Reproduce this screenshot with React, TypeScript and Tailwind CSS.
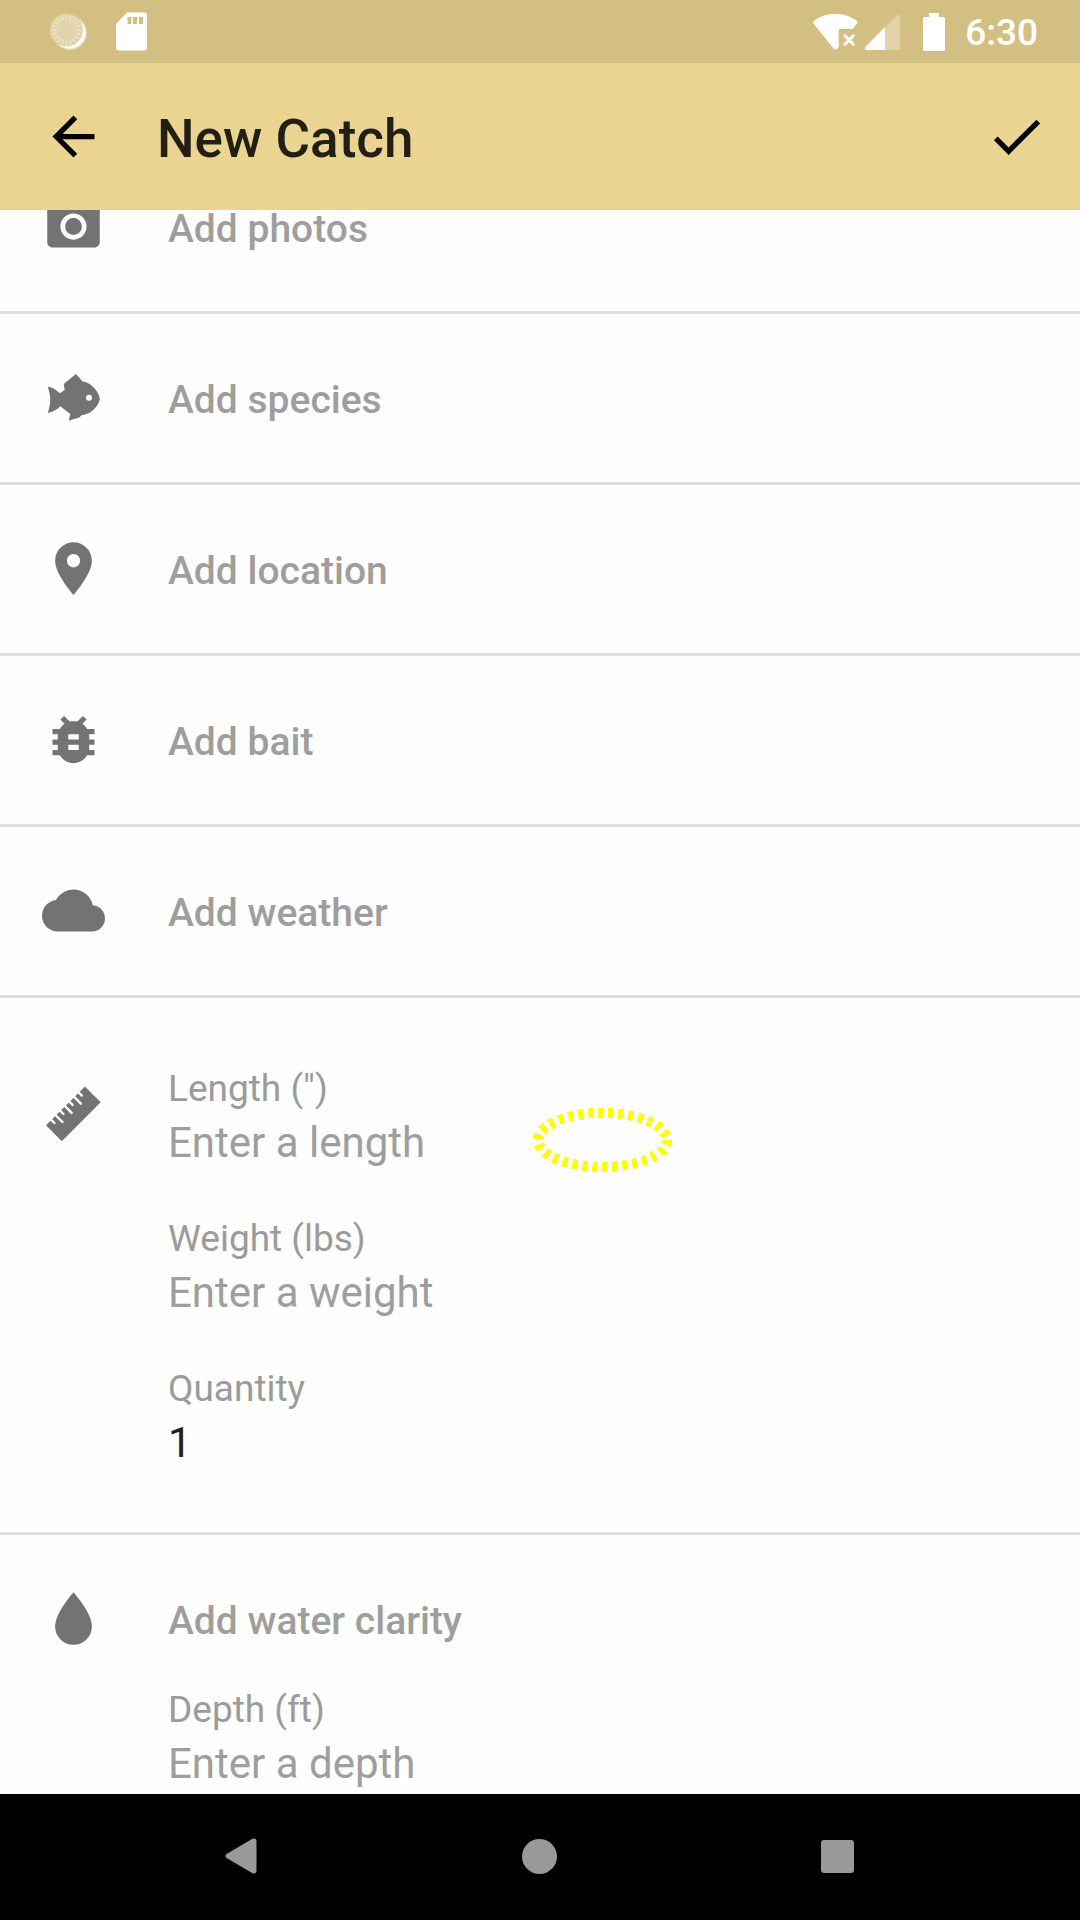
import React from "react";

const ICONS = {
  camera:
    "M9 2L7.17 4H4c-1.1 0-2 .9-2 2v12c0 1.1.9 2 2 2h16c1.1 0 2-.9 2-2V6c0-1.1-.9-2-2-2h-3.17L15 2H9zm3 15c-2.76 0-5-2.24-5-5s2.24-5 5-5 5 2.24 5 5-2.24 5-5 5zM12 8.8a3.2 3.2 0 1 0 0 6.4 3.2 3.2 0 0 0 0-6.4z",
  pin: "M12 2C8.13 2 5 5.13 5 9c0 5.25 7 13 7 13s7-7.75 7-13c0-3.87-3.13-7-7-7zm0 9.5c-1.38 0-2.5-1.12-2.5-2.5s1.12-2.5 2.5-2.5 2.5 1.12 2.5 2.5-1.12 2.5-2.5 2.5z",
  bug: "M20 8h-2.81c-.45-.78-1.07-1.45-1.82-1.96L17 4.41 15.59 3l-2.17 2.17C12.96 5.06 12.49 5 12 5c-.49 0-.96.06-1.41.17L8.41 3 7 4.41l1.62 1.63C7.88 6.55 7.26 7.22 6.81 8H4v2h2.09c-.05.33-.09.66-.09 1v1H4v2h2v1c0 .34.04.67.09 1H4v2h2.81c1.04 1.79 2.97 3 5.19 3s4.15-1.21 5.19-3H20v-2h-2.09c.05-.33.09-.66.09-1v-1h2v-2h-2v-1c0-.34-.04-.67-.09-1H20V8zm-6 8h-4v-2h4v2zm0-4h-4v-2h4v2z",
  cloud:
    "M19.35 10.04C18.67 6.59 15.64 4 12 4 9.11 4 6.6 5.64 5.35 8.04 2.34 8.36 0 10.91 0 14c0 3.31 2.69 6 6 6h13c2.76 0 5-2.24 5-5 0-2.64-2.05-4.78-4.65-4.96z",
  drop: "M12 22c-3.87 0-7-3.13-7-7 0-5.25 7-13 7-13s7 7.75 7 13c0 3.87-3.13 7-7 7z",
  back: "M20 11H7.83l5.59-5.59L12 4l-8 8 8 8 1.41-1.41L7.83 13H20v-2z",
  check: "M9 16.17L4.83 12l-1.42 1.41L9 19 21 7l-1.41-1.41z",
};

function Icon({ d }: { d: string }) {
  return (
    <svg aria-hidden="true" viewBox="0 0 24 24" className="size-[63px] shrink-0 fill-current">
      <path fillRule="evenodd" d={d} />
    </svg>
  );
}

function FishIcon() {
  return (
    <svg aria-hidden="true" viewBox="6 3 189 189" className="size-[63px] shrink-0 fill-current">
      <path d="M23 65C37 67 50 74 59 85L74 75L71 57L108 27L127 49C152 53 174 75 180 102C172 131 148 149 124 151L119 157L86 167L91 147L61 124C51 135 38 141 23 144C33 118 33 91 23 65Z" />
      <circle cx="147" cy="98" r="9" className="fill-[#fefefe]" />
    </svg>
  );
}

function RulerIcon() {
  const marks = [
    [23, 13],
    [42, 28],
    [61, 13],
    [81, 28],
    [100, 13],
    [120, 28],
    [139, 13],
  ];
  return (
    <svg aria-hidden="true" viewBox="6 6 189 189" className="size-[63px] shrink-0 fill-current">
      <g transform="translate(18 136) rotate(-45)">
        <rect width="165" height="67" rx="2" />
        {marks.map(([x, depth]) => (
          <path key={x} d={`M${x} -4V${depth}`} className="stroke-[#fefefe]" strokeWidth="7" strokeLinecap="round" />
        ))}
      </g>
    </svg>
  );
}

function StatusBar() {
  const ticks = Array.from({ length: 20 }, (_, i) => i * 18);
  return (
    <div className="flex h-[63px] shrink-0 items-center bg-[#d4bf83] pr-[42px] pl-[49px] text-white">
      <svg aria-hidden="true" viewBox="0 0 39 39" className="size-[39px]">
        <circle cx="21" cy="21" r="17" fill="white" opacity="0.45" />
        <circle cx="20.5" cy="20.5" r="16" fill="white" />
        <circle cx="17.5" cy="18" r="16.5" fill="#e1d3aa" />
        {ticks.map((a) => (
          <path
            key={a}
            d="M17.5 3V8"
            transform={`rotate(${a} 17.5 18)`}
            stroke="#ece2c6"
            strokeWidth="1.6"
          />
        ))}
      </svg>
      <svg aria-hidden="true" viewBox="0 0 31 39" className="ml-7 h-[39px] w-[31px]">
        <path
          fill="currentColor"
          fillRule="evenodd"
          d="M11 .5H28Q31 .5 31 3.500V35.500Q31 38.500 28 38.500H3Q0 38.500 0 35.500V12ZM11.500 5V12H15.500V5ZM17 5V12H21V5ZM23 5V12H27V5Z"
        />
      </svg>
      <div className="ml-auto flex items-center">
        <svg aria-hidden="true" viewBox="98 36 135 114" className="h-[38px] w-[45px]">
          <path
            fill="currentColor"
            d="M98 66Q97 62 101 59Q129 38 165 38Q201 38 229 59Q233 62 231 67L219 82Q217 84 214 84H178Q175 84 175 87V138Q172 146 165 146Q161 145 159 142Z"
          />
          <path d="M194 104L219 130M219 104L194 130" stroke="currentColor" strokeWidth="9" strokeLinecap="round" />
        </svg>
        <svg aria-hidden="true" viewBox="255 36 105 114" className="ml-[7px] h-[38px] w-[35px]">
          <path fill="currentColor" opacity="0.3" d="M315 80L351 43Q360 39 360 47V143Q360 147 356 147H315Z" />
          <path fill="currentColor" d="M315 78V147H259Q253 145 256 138Z" />
        </svg>
        <svg aria-hidden="true" viewBox="0 0 22 38" className="ml-[23px] h-[38px] w-[22px]">
          <path
            fill="currentColor"
            d="M6 0H16V4H20.500Q22 4 22 5.500V36.500Q22 38 20.500 38H1.500Q0 38 0 36.500V5.500Q0 4 1.500 4H6Z"
          />
        </svg>
        <span className="ml-5 pt-[3px] text-[37px] leading-[50px] font-medium">6:30</span>
      </div>
    </div>
  );
}

function AddLabel({ children }: { children: React.ReactNode }) {
  return <span className="pt-[5px] text-[39px] leading-[38px] font-medium text-[#9e9e9e]">{children}</span>;
}

function AddRow({ icon, label }: { icon: React.ReactNode; label: string }) {
  return (
    <button
      type="button"
      className="flex w-full items-center gap-[63px] border-b-[3px] border-[#dedede] px-[42px] pt-[52px] pb-[53px] text-left text-[#737373]"
    >
      {icon}
      <AddLabel>{label}</AddLabel>
    </button>
  );
}

function Field({ id, label, placeholder, value }: { id: string; label: string; placeholder?: string; value?: string }) {
  return (
    <div className="flex flex-col">
      <label htmlFor={id} className="text-[37px] leading-[50px] text-[#9b9b9b]">
        {label}
      </label>
      <input
        id={id}
        type="text"
        placeholder={placeholder}
        defaultValue={value}
        className="h-[58px] w-full bg-transparent text-[42px] leading-[58px] text-[#212121] outline-none placeholder:text-[#9e9e9e]"
      />
    </div>
  );
}

export default function App() {
  return (
    <div className="flex h-screen flex-col overflow-hidden bg-[#fefefe] font-[Roboto,sans-serif]">
      <StatusBar />
      <header className="flex h-[147px] shrink-0 items-center bg-[#ebd391] pr-8 pl-[42px] text-black">
        <button type="button" aria-label="Back">
          <Icon d={ICONS.back} />
        </button>
        <h1 className="ml-[52px] pt-1 text-[53px] leading-[64px] font-medium text-[#221f15]">New Catch</h1>
        <button type="button" aria-label="Save" className="ml-auto">
          <Icon d={ICONS.check} />
        </button>
      </header>

      <main className="min-h-0 flex-1 overflow-hidden">
        <div className="-mt-[67px]">
          <AddRow icon={<Icon d={ICONS.camera} />} label="Add photos" />
          <AddRow icon={<FishIcon />} label="Add species" />
          <AddRow icon={<Icon d={ICONS.pin} />} label="Add location" />
          <AddRow icon={<Icon d={ICONS.bug} />} label="Add bait" />
          <AddRow icon={<Icon d={ICONS.cloud} />} label="Add weather" />

          <section className="relative flex gap-[63px] border-b-[3px] border-[#dedede] px-[42px] pt-[66px] pb-[60px] text-[#737373]">
            <div className="pt-[18px]">
              <RulerIcon />
            </div>
            <div className="flex flex-1 flex-col gap-[42px]">
              <Field id="length" label={'Length (")'} placeholder="Enter a length" />
              <Field id="weight" label="Weight (lbs)" placeholder="Enter a weight" />
              <Field id="quantity" label="Quantity" value="1" />
            </div>
            <svg
              aria-hidden="true"
              viewBox="0 0 140 64"
              className="pointer-events-none absolute top-[110px] left-[533px] h-16 w-[140px]"
            >
              <ellipse
                cx="69.500"
                cy="32"
                rx="64.500"
                ry="27"
                fill="none"
                stroke="#ffff00"
                strokeWidth="10"
                strokeDasharray="5 5"
                shapeRendering="crispEdges"
              />
            </svg>
          </section>

          <section className="flex gap-[63px] px-[42px] pt-[52px] text-[#737373]">
            <Icon d={ICONS.drop} />
            <div className="flex flex-1 flex-col gap-[35px]">
              <button type="button" className="flex h-[63px] items-center text-left">
                <AddLabel>Add water clarity</AddLabel>
              </button>
              <Field id="depth" label="Depth (ft)" placeholder="Enter a depth" />
            </div>
          </section>
        </div>
      </main>

      <nav className="flex h-[126px] shrink-0 items-center justify-center gap-[172px] bg-black pr-0.5 pb-0.5 text-[#999999]">
        <button type="button" aria-label="Back" className="flex w-[126px] justify-center">
          <svg aria-hidden="true" viewBox="0 0 32 36" className="h-9 w-8">
            <path
              fill="currentColor"
              d="M1.500 16L27.500.8Q31.500-.3 31.500 3.500V32.500Q31.500 36.300 27.500 35.200L1.500 20Q-.5 18 1.500 16Z"
            />
          </svg>
        </button>
        <button type="button" aria-label="Home" className="flex w-[126px] justify-center">
          <span className="size-[35px] rounded-full bg-[#999999]" />
        </button>
        <button type="button" aria-label="Recent apps" className="flex w-[126px] justify-center">
          <span className="size-[33px] rounded-[3px] bg-[#999999]" />
        </button>
      </nav>
    </div>
  );
}
